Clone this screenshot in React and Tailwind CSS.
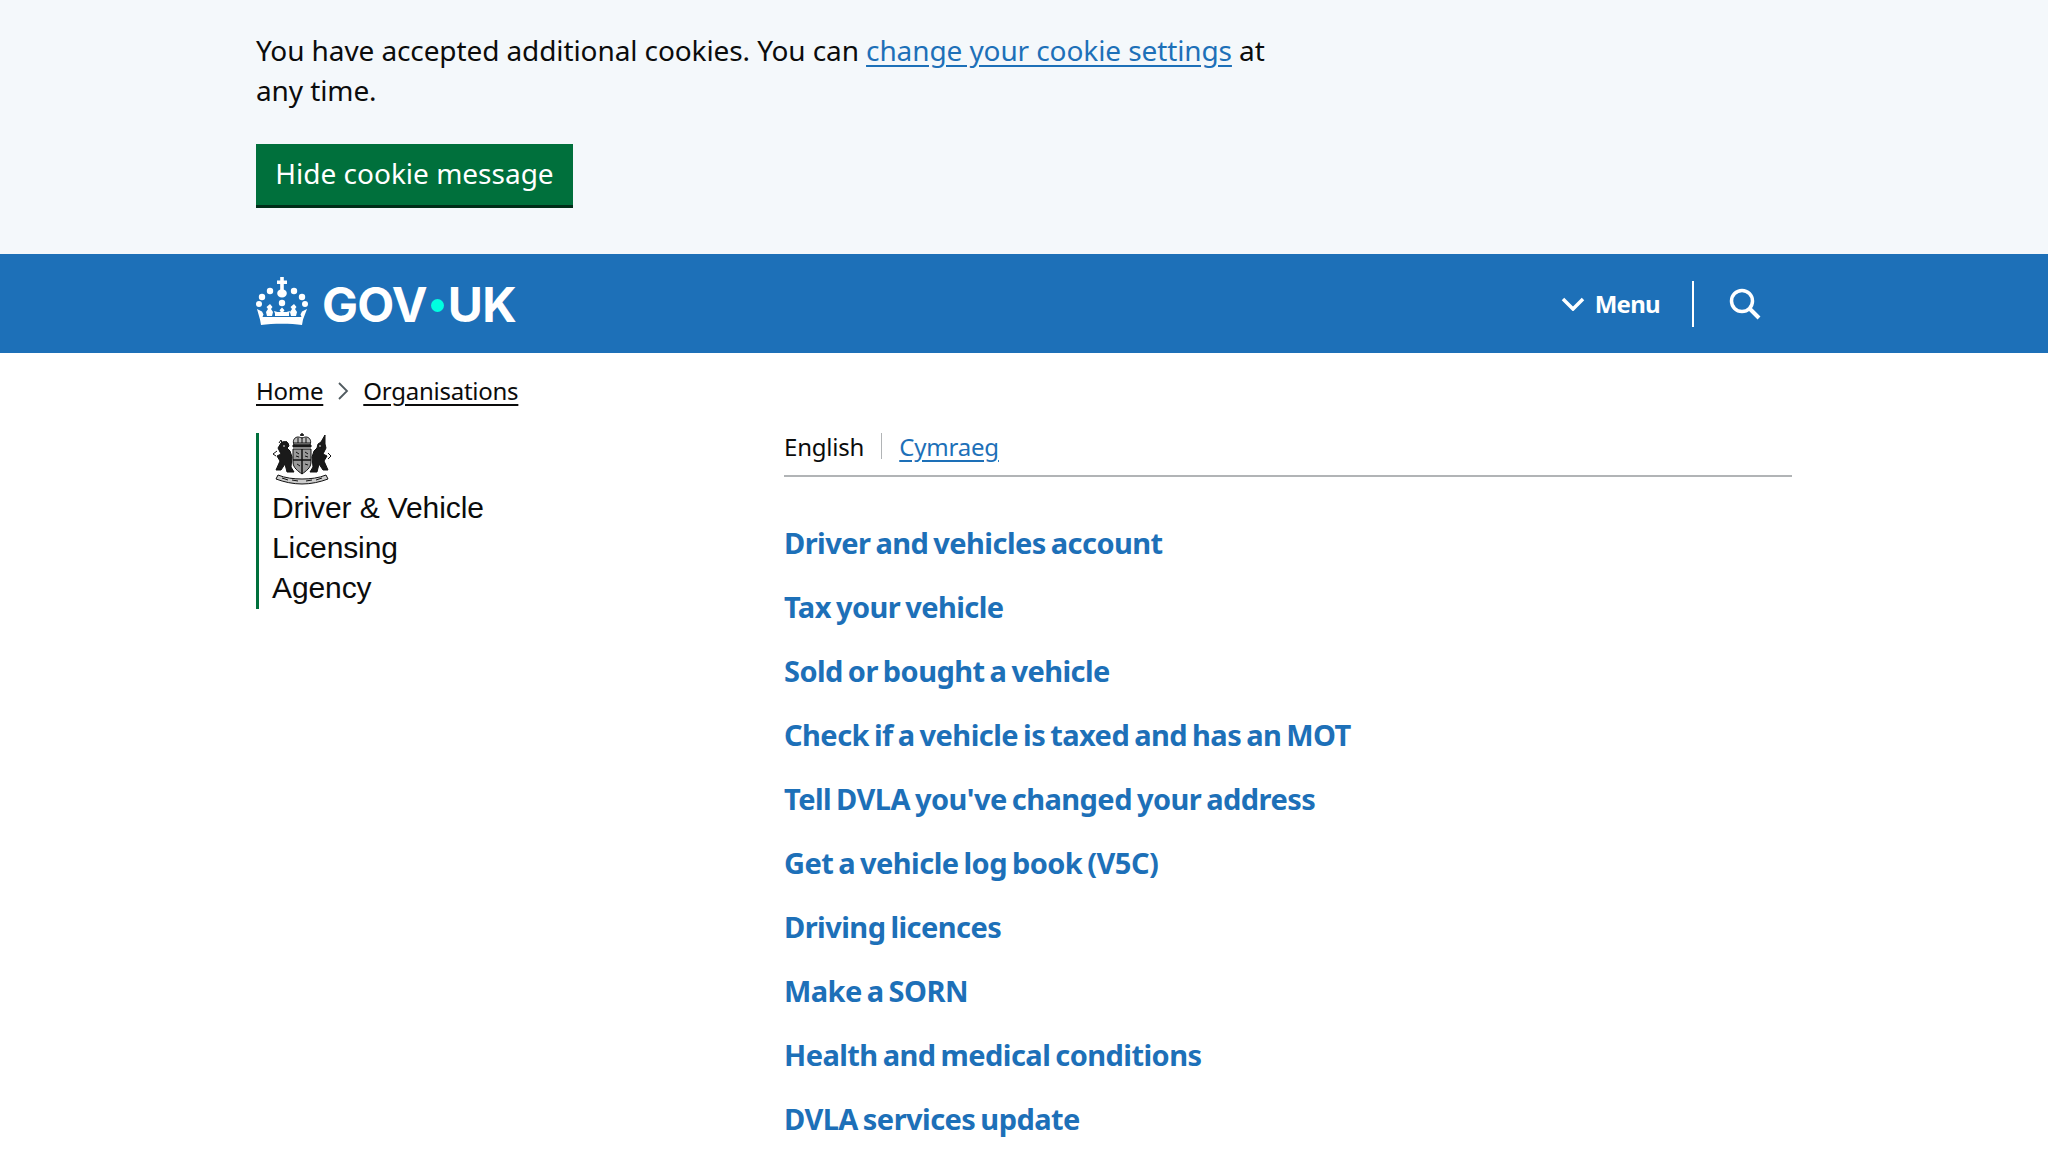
import React from 'react';

const links = [
  'Driver and vehicles account',
  'Tax your vehicle',
  'Sold or bought a vehicle',
  'Check if a vehicle is taxed and has an MOT',
  "Tell DVLA you've changed your address",
  'Get a vehicle log book (V5C)',
  'Driving licences',
  'Make a SORN',
  'Health and medical conditions',
  'DVLA services update',
];

const Crown = () => (
  <svg viewBox="0 0 52 48" className="w-[52px] h-[48px] shrink-0 mb-[5px]" fill="#fff">
    <path d="M24.200 0h3.600v3.500H31v3.600h-3.200v5.400c2 .8 3 2.200 3 3.800 0 2.500-2 4.200-4.800 4.200s-4.800-1.700-4.800-4.200c0-1.600 1-3 3-3.800V7.100H21V3.500h3.200z" />
    <circle cx="14" cy="14" r="3.200" />
    <circle cx="38" cy="14" r="3.200" />
    <circle cx="6" cy="20" r="3.200" />
    <circle cx="46" cy="20" r="3.200" />
    <circle cx="3" cy="27" r="3" />
    <circle cx="49" cy="27" r="3" />
    <circle cx="26" cy="26" r="3.200" />
    <path d="M26 30.500l2.500 2.800-1.300 1.800h3.300l3.500-1 -1 2.300v2.600h-14v-2.600l-1-2.300 3.500 1h3.300l-1.300-1.800z" />
    <path d="M14 27l2.500 3-1.500 2 2 3-1 4h-5l-1-4 2-3-1.500-2z" />
    <path d="M38 27l2.500 3-1.500 2 2 3-1 4h-5l-1-4 2-3-1.500-2z" />
    <path d="M1 32l5 2.500 1.500 3-1 2.500h39l-1-2.500 1.500-3 5-2.500-4 10.500-1 5.500C35 46.300 17 46.300 5 48l-1-5.500z" />
  </svg>
);

const Arms = () => (
  <svg viewBox="0 0 60 52" className="w-[60px] h-[52px]" fill="none" stroke="#111" strokeWidth="1">
    <path d="M30 0v3M28 2h4" strokeWidth="1.400" />
    <path d="M22 12c-2-5 1-8 4-8 2 0 3 1 4 1s2-1 4-1c3 0 6 3 4 8z" fill="#bbb" />
    <path d="M22 10h16M26 5v5M30 4v6M34 5v5" />
    <path d="M21 12h18v2H21z" fill="#222" />
    <path d="M21 16h18v13c0 6-5 9-9 12-4-3-9-6-9-12z" fill="#999" />
    <path d="M30 16v25M21 27h18" strokeWidth="1.500" />
    <path d="M24 19l3 2M24 23l3 1M33 19l3 2M33 23l3 1M25 31l3 2M33 31l3 1" />
    <path d="M9 10c2-2 5-2 7 0l1 3-2 2 3 3 2 6-1 10 3 5h-7l-2-8-4 6H4l4-9-3-5 4-2-3-6z" fill="#1a1a1a" />
    <path d="M7 10l2-3 1 3M14 8l1 2M5 18l-4 3 3 2" />
    <path d="M53 2l-4 7-3 2-1 4-3 3-2 6 1 10-3 5h7l2-8 4 6h5l-4-9 3-5-4-2 3-6-1-4z" fill="#1a1a1a" />
    <path d="M56 20l3 3-3 3M46 13l4 2" />
    <circle cx="12" cy="13" r="0.800" fill="#fff" stroke="none" />
    <circle cx="48" cy="13" r="0.800" fill="#fff" stroke="none" />
    <path d="M6 42c7 3 16 4 24 4s17-1 24-4l2 4c-8 3-17 5-26 5S12 49 4 46z" fill="#ccc" />
    <path d="M10 45l6 2M20 47l6 1M34 48l6-1M44 47l6-2" />
  </svg>
);

export default function App() {
  return (
    <div className="font-['Noto_Sans',sans-serif] text-[#0b0c0c] h-[1152px] overflow-hidden bg-white">
      <div className="bg-[#f4f8fb] h-[254px] pl-[256px] pt-[30px]">
        <p className="w-[1024px] text-[28px] leading-[40px] tracking-[-0.1px]">
          You have accepted additional cookies. You can{' '}
          <a className="text-[#1d70b8] underline underline-offset-[4px]">change your cookie settings</a> at
          <br />
          any time.
        </p>
        <button className="mt-[34px] h-[64px] w-[317px] pb-[3px] bg-[#00703c] border-b-[3px] border-[#002d18] text-white text-[28px]">
          Hide cookie message
        </button>
      </div>

      <header className="bg-[#1d70b8] h-[99px] px-[256px] flex items-center text-white">
        <Crown />
        <span className="ml-[14px] mt-[3px] font-['Inter',sans-serif] font-bold text-[48px] tracking-[-0.7px] leading-none flex items-center">
          GOV<span className="mx-[4px] w-[13px] h-[13px] rounded-full bg-[#00ffe0]" />UK
        </span>
        <div className="ml-auto flex items-center mr-[31px]">
          <svg viewBox="0 0 24 14" className="w-[24px] h-[14px]" fill="none" stroke="#fff" strokeWidth="3.500">
            <path d="M2 2l10 10L22 2" />
          </svg>
          <span className="ml-[10px] font-bold text-[24px] tracking-[-0.7px]">Menu</span>
          <div className="ml-[32px] w-[2px] h-[46px] bg-white" />
          <svg viewBox="0 0 32 32" className="ml-[35px] w-[32px] h-[32px]" fill="none" stroke="#fff" strokeWidth="3.500">
            <circle cx="13" cy="13" r="10.500" />
            <path d="M20.500 20.500L30 30" strokeWidth="4" />
          </svg>
        </div>
      </header>

      <div className="px-[256px]">
        <nav className="flex items-center pt-[18px] text-[24px] tracking-[-0.25px] leading-[40px]">
          <a className="underline underline-offset-[4px]">Home</a>
          <svg viewBox="0 0 12 20" className="mx-[14px] w-[12px] h-[20px]" fill="none" stroke="#505a5f" strokeWidth="1.800">
            <path d="M2 2l8 8-8 8" />
          </svg>
          <a className="underline underline-offset-[4px]">Organisations</a>
        </nav>

        <div className="flex mt-[22px]">
          <div className="w-[528px] shrink-0">
            <div className="w-[260px] border-l-[3px] border-[#00703c] pl-[13px] h-[176px]">
              <Arms />
              <div className="font-['Liberation_Sans',sans-serif] text-[30px] tracking-[-0.1px] leading-[40px] mt-[3px]">
                Driver &amp; Vehicle
                <br />
                Licensing
                <br />
                Agency
              </div>
            </div>
          </div>

          <div className="flex-1">
            <div className="flex items-start h-[42px] border-b-2 border-[#b1b4b6] box-content text-[24px] tracking-[-0.2px] leading-[28px]">
              <span>English</span>
              <span className="mx-[17px] w-px h-[26px] bg-[#b1b4b6]" />
              <a className="text-[#1d70b8] underline underline-offset-[4px]">Cymraeg</a>
            </div>
            <ul className="mt-[46px] flex flex-col gap-[24px]">
              {links.map((l) => (
                <li key={l} className="h-[40px] leading-[40px] text-[29px] font-bold text-[#1d70b8] tracking-[-0.55px] [word-spacing:-2px]">
                  {l}
                </li>
              ))}
            </ul>
          </div>
        </div>
      </div>
    </div>
  );
}
